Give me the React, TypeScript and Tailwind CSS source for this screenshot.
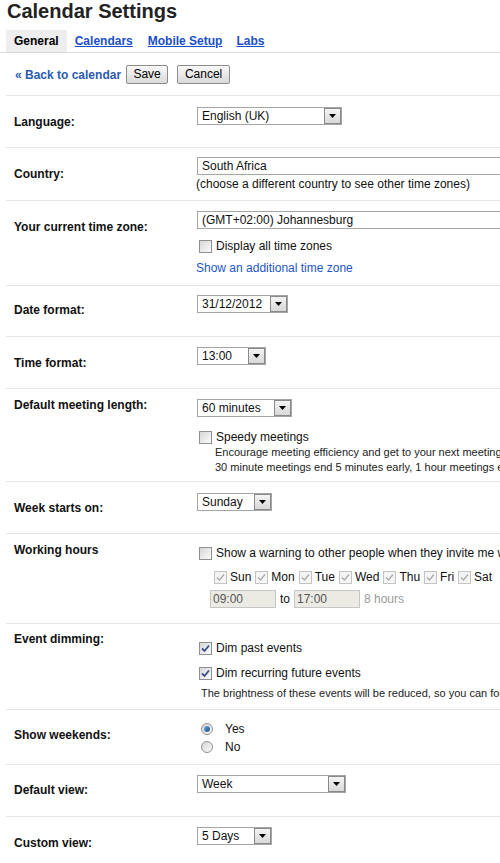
import React from 'react';

type SelectProps = {
  value: string;
  w: string;
};

function Select({ value, w }: SelectProps) {
  return (
    <div className={`${w} ml-[1px] h-[18px] flex items-stretch border border-[#a5a5a5] bg-white`}>
      <span className="flex-1 pl-[4px] leading-[16px] whitespace-nowrap overflow-hidden">{value}</span>
      <span className="w-[17px] flex items-center justify-center border border-[#8a8a8a] bg-gradient-to-b from-[#f4f4f4] to-[#d8d8d8]">
        <svg width="7" height="4" viewBox="0 0 7 4">
          <polygon points="0,0 7,0 3.5,4" fill="#000" />
        </svg>
      </span>
    </div>
  );
}

type BoxProps = {
  checked?: boolean;
  disabled?: boolean;
};

function Checkbox({ checked, disabled }: BoxProps) {
  return (
    <span
      className={
        disabled
          ? 'w-[13px] h-[13px] shrink-0 flex items-center justify-center border border-[#c4c4c4] bg-[#f4f4f4]'
          : 'w-[13px] h-[13px] shrink-0 flex items-center justify-center border border-[#8e8f8f] bg-gradient-to-br from-[#d8d8d8] to-[#fbfbfb]'
      }
    >
      {checked && (
        <svg width="9" height="9" viewBox="0 0 9 9">
          <path
            d="M1 4.5 L3.5 7 L8 1.5"
            fill="none"
            stroke={disabled ? '#a8a8a8' : '#3b4d8f'}
            strokeWidth={disabled ? 1.2 : 1.8}
          />
        </svg>
      )}
    </span>
  );
}

function Radio({ checked }: { checked?: boolean }) {
  return (
    <span className="w-[12px] h-[12px] shrink-0 rounded-full flex items-center justify-center border border-[#8e8f8f] bg-gradient-to-br from-[#d6d6d6] to-[#fbfbfb]">
      {checked && <span className="w-[6px] h-[6px] rounded-full bg-gradient-to-br from-[#6aa8e0] to-[#1b4f8c]" />}
    </span>
  );
}

function Row({
  label,
  h,
  lpt,
  cpt,
  children,
}: {
  label: string;
  h: string;
  lpt: string;
  cpt: string;
  children: React.ReactNode;
}) {
  return (
    <div className={`${h} flex border-t border-[#e6e6e6]`}>
      <div className={`w-[190px] shrink-0 pl-[8px] ${lpt} font-bold leading-[16px]`}>{label}</div>
      <div className={`flex-1 ${cpt}`}>{children}</div>
    </div>
  );
}

const days = ['Sun', 'Mon', 'Tue', 'Wed', 'Thu', 'Fri', 'Sat'];

export default function App() {
  return (
    <div className="w-[500px] h-[863px] overflow-hidden bg-white text-[12px] text-[#111] font-['Liberation_Sans',Arial,sans-serif]">
      <div className="w-[760px]">
        <h1 className="pl-[7px] text-[20px] leading-[22px] font-bold text-[#222]">Calendar Settings</h1>

        {/* tabs */}
        <div className="mt-[8px] flex pl-[6px] border-b border-[#d8d8d8] font-bold">
          <div className="h-[22px] px-[8px] flex items-center bg-[#eeeeee] text-black">General</div>
          <a className="h-[22px] px-[8px] flex items-center text-[#1a4fc9] underline">Calendars</a>
          <a className="h-[22px] px-[7px] flex items-center text-[#1a4fc9] underline">Mobile Setup</a>
          <a className="h-[22px] px-[7px] flex items-center text-[#1a4fc9] underline">Labs</a>
        </div>

        {/* actions */}
        <div className="h-[42px] pt-[12px] pl-[15px] flex items-start">
          <a className="h-[19px] flex items-center font-bold text-[#2a5db0]">« Back to calendar</a>
          <button className="ml-[5px] w-[42px] h-[19px] rounded-[2px] border border-[#8c8c8c] bg-gradient-to-b from-[#f8f8f8] to-[#dadada] text-black leading-[17px]">
            Save
          </button>
          <button className="ml-[9px] w-[53px] h-[19px] rounded-[2px] border border-[#8c8c8c] bg-gradient-to-b from-[#f8f8f8] to-[#dadada] text-black leading-[17px]">
            Cancel
          </button>
        </div>

        <div className="ml-[6px]">
          <Row label="Language:" h="h-[52px]" lpt="pt-[18px]" cpt="pt-[11px]">
            <Select value="English (UK)" w="w-[145px]" />
          </Row>

          <Row label="Country:" h="h-[53px]" lpt="pt-[18px]" cpt="pt-[9px]">
            <Select value="South Africa" w="w-[420px]" />
            <div className="mt-[2px] leading-[15px]">(choose a different country to see other time zones)</div>
          </Row>

          <Row label="Your current time zone:" h="h-[85px]" lpt="pt-[18px]" cpt="pt-[10px]">
            <Select value="(GMT+02:00) Johannesburg" w="w-[420px]" />
            <div className="mt-[9px] h-[16px] flex items-center">
              <span className="ml-[3px]">
                <Checkbox />
              </span>
              <span className="ml-[4px]">Display all time zones</span>
            </div>
            <div className="mt-[6px] leading-[16px] text-[#2255cc]">Show an additional time zone</div>
          </Row>

          <Row label="Date format:" h="h-[51px]" lpt="pt-[16px]" cpt="pt-[9px]">
            <Select value="31/12/2012" w="w-[91px]" />
          </Row>

          <Row label="Time format:" h="h-[52px]" lpt="pt-[18px]" cpt="pt-[10px]">
            <Select value="13:00" w="w-[69px]" />
          </Row>

          <Row label="Default meeting length:" h="h-[93px]" lpt="pt-[8px]" cpt="pt-[10px]">
            <Select value="60 minutes" w="w-[95px]" />
            <div className="mt-[12px] h-[16px] flex items-center">
              <span className="ml-[3px]">
                <Checkbox />
              </span>
              <span className="ml-[4px]">Speedy meetings</span>
            </div>
            <div className="pl-[19px] text-[11px] leading-[15px] text-[#222] whitespace-nowrap">
              <div>Encourage meeting efficiency and get to your next meeting on time.</div>
              <div>30 minute meetings end 5 minutes early, 1 hour meetings end 10 minutes early.</div>
            </div>
          </Row>

          <Row label="Week starts on:" h="h-[52px]" lpt="pt-[18px]" cpt="pt-[11px]">
            <Select value="Sunday" w="w-[75px]" />
          </Row>

          <Row label="Working hours" h="h-[90px]" lpt="pt-[8px]" cpt="pt-[11px]">
            <div className="h-[16px] flex items-center whitespace-nowrap">
              <span className="ml-[3px]">
                <Checkbox />
              </span>
              <span className="ml-[4px]">Show a warning to other people when they invite me when I'm not working</span>
            </div>
            <div className="mt-[8px] h-[16px] pl-[18px] flex items-center">
              {days.map((d) => (
                <span key={d} className="mr-[4px] flex items-center">
                  <Checkbox checked disabled />
                  <span className="ml-[3px]">{d}</span>
                </span>
              ))}
            </div>
            <div className="mt-[5px] pl-[14px] flex items-center">
              <div className="w-[66px] h-[18px] pl-[2px] border border-[#c6c6c6] bg-[#ebebe4] text-[#555] leading-[16px]">09:00</div>
              <span className="mx-[4px]">to</span>
              <div className="w-[66px] h-[18px] pl-[2px] border border-[#c6c6c6] bg-[#ebebe4] text-[#555] leading-[16px]">17:00</div>
              <span className="ml-[4px] text-[#9a9a9a]">8 hours</span>
            </div>
          </Row>

          <Row label="Event dimming:" h="h-[86px]" lpt="pt-[7px]" cpt="pt-[16px]">
            <div className="h-[16px] flex items-center">
              <span className="ml-[3px]">
                <Checkbox checked />
              </span>
              <span className="ml-[4px]">Dim past events</span>
            </div>
            <div className="mt-[9px] h-[16px] flex items-center">
              <span className="ml-[3px]">
                <Checkbox checked />
              </span>
              <span className="ml-[4px]">Dim recurring future events</span>
            </div>
            <div className="mt-[5px] pl-[5px] text-[11px] leading-[15px] text-[#222] whitespace-nowrap">
              The brightness of these events will be reduced, so you can focus on what is coming up.
            </div>
          </Row>

          <Row label="Show weekends:" h="h-[55px]" lpt="pt-[17px]" cpt="pt-[10px]">
            <div className="h-[18px] flex items-center">
              <span className="ml-[5px]">
                <Radio checked />
              </span>
              <span className="ml-[12px]">Yes</span>
            </div>
            <div className="h-[18px] flex items-center">
              <span className="ml-[5px]">
                <Radio />
              </span>
              <span className="ml-[12px]">No</span>
            </div>
          </Row>

          <Row label="Default view:" h="h-[52px]" lpt="pt-[17px]" cpt="pt-[10px]">
            <Select value="Week" w="w-[149px]" />
          </Row>

          <Row label="Custom view:" h="h-[52px]" lpt="pt-[18px]" cpt="pt-[10px]">
            <Select value="5 Days" w="w-[75px]" />
          </Row>
        </div>
      </div>
    </div>
  );
}
